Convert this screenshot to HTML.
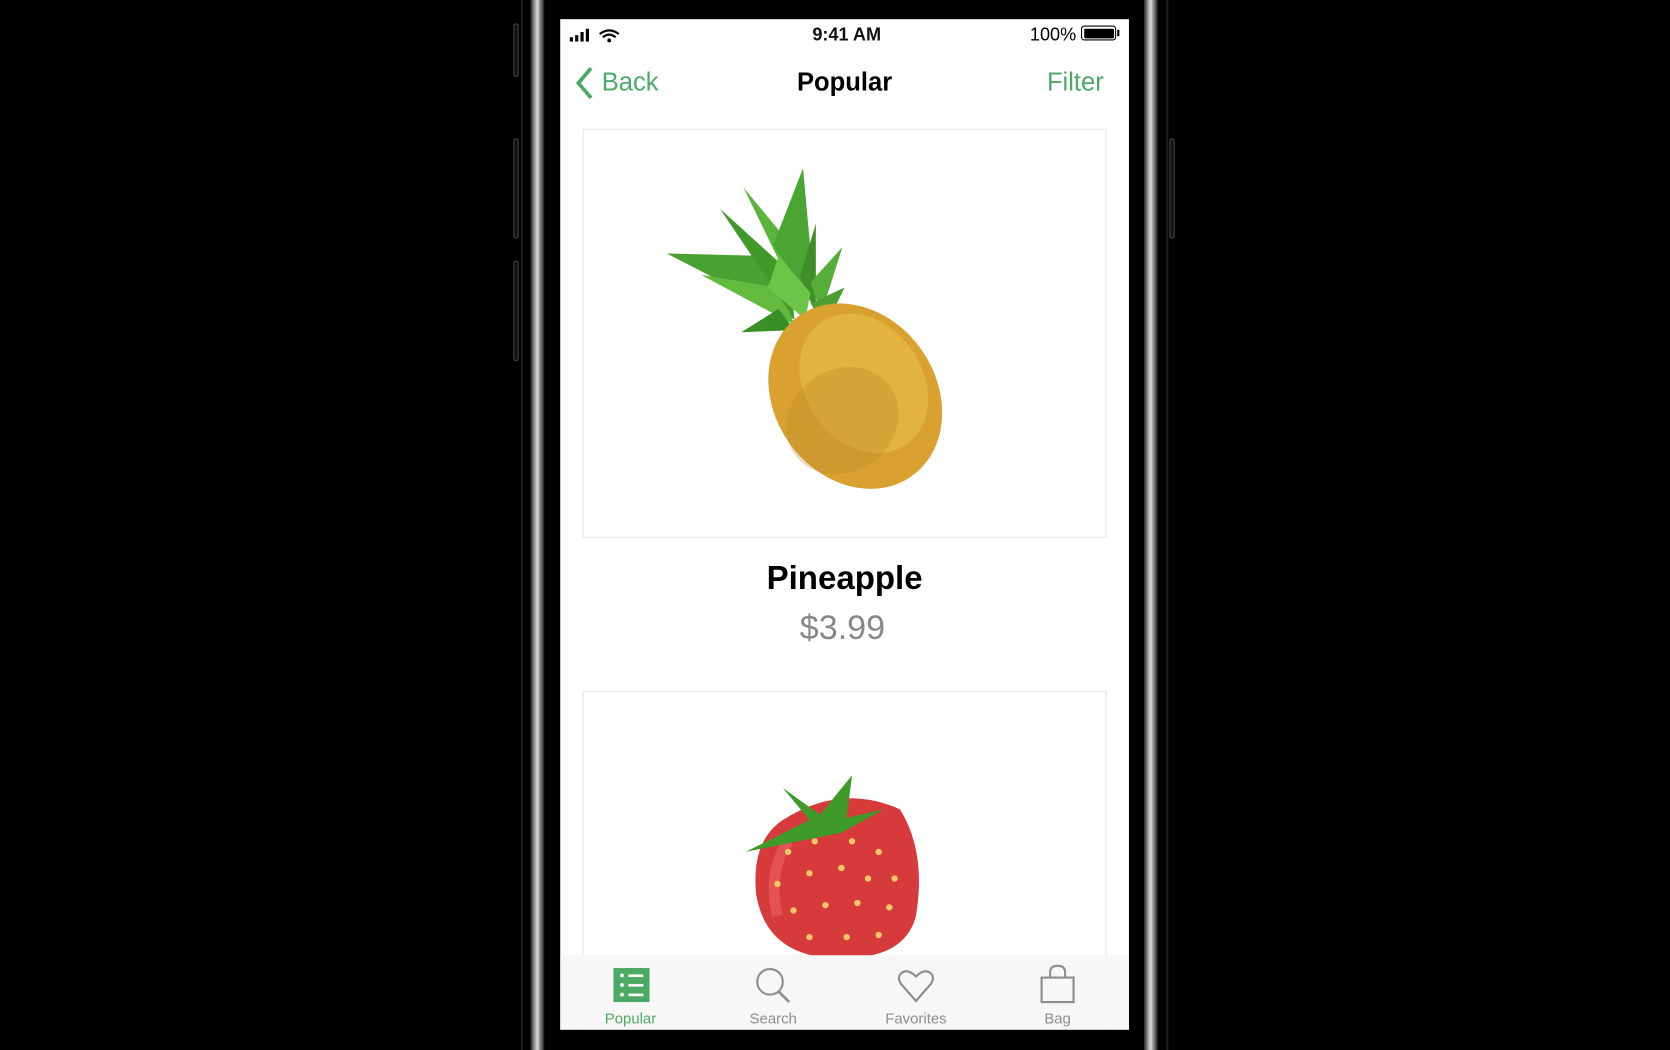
<!DOCTYPE html>
<html><head><meta charset="utf-8"><style>
html,body{margin:0;padding:0;background:#000;width:1670px;height:1050px;overflow:hidden}
#w{position:absolute;left:0;top:0;width:1568px;height:986px;overflow:hidden;transform:scale(1.06505,1.0649);transform-origin:0 0;font-family:"Liberation Sans",sans-serif}
.a{position:absolute}
.g{color:#4caa64}
.m{background:linear-gradient(90deg,#222,#999 30%,#ddd 50%,#888 70%,#222)}
</style></head><body><div id="w">
<div class="a m" style="left:498px;top:0;width:13px;height:986px"></div>
<div class="a m" style="left:1074px;top:0;width:13px;height:986px"></div>
<div class="a" style="left:489px;top:0;width:2px;height:986px;background:#1c1c1c"></div>
<div class="a" style="left:1095px;top:0;width:2px;height:986px;background:#1c1c1c"></div>
<div class="a" style="left:482px;top:22px;width:3px;height:48px;border:1px solid #444;background:#111;border-radius:2px"></div>
<div class="a" style="left:482px;top:130px;width:3px;height:92px;border:1px solid #444;background:#111;border-radius:2px"></div>
<div class="a" style="left:482px;top:245px;width:3px;height:92px;border:1px solid #444;background:#111;border-radius:2px"></div>
<div class="a" style="left:1098px;top:130px;width:3px;height:92px;border:1px solid #444;background:#111;border-radius:2px"></div>
<div class="a" style="left:526px;top:18px;width:534px;height:949px;background:#fff;overflow:hidden">
 <svg class="a" style="left:8px;top:8px" width="50" height="16"><rect x="1" y="9" width="3" height="4" fill="#000"/><rect x="6" y="7" width="3" height="6" fill="#000"/><rect x="11" y="4" width="3" height="9" fill="#000"/><rect x="16" y="1" width="3" height="12" fill="#000"/>
 <path d="M29 6 Q38 -1 47 6" stroke="#000" stroke-width="2" fill="none"/><path d="M32 9 Q38 4 44 9" stroke="#000" stroke-width="2" fill="none"/><circle cx="38" cy="12" r="1.8" fill="#000"/></svg>
 <div class="a" style="left:0;width:538px;top:5px;text-align:center;font-size:17px;font-weight:bold;color:#111">9:41 AM</div>
 <div class="a" style="left:441px;top:5px;font-size:17px">100%</div>
 <div class="a" style="left:489px;top:6px;width:31px;height:12px;border:1.5px solid #000;border-radius:3px"><div style="margin:1.5px;height:9px;background:#000;border-radius:1px"></div></div>
 <div class="a" style="left:523px;top:10px;width:2px;height:6px;background:#000"></div>
 <svg class="a" style="left:13px;top:44px" width="20" height="32"><path d="M16 2 L4 16 L16 30" stroke="#4caa64" stroke-width="3.5" fill="none"/></svg>
 <div class="a g" style="left:39px;top:46px;font-size:24px">Back</div>
 <div class="a" style="left:0;width:534px;top:46px;text-align:center;font-size:24px;font-weight:bold">Popular</div>
 <div class="a g" style="left:457px;top:46px;font-size:24px">Filter</div>
 <div class="a" style="left:21px;top:103px;width:490px;height:382px;border:1px solid #e6e6e6"></div>
 <svg class="a" style="left:100px;top:130px" width="300" height="330" viewBox="640 148 300 330">
   <path d="M760 300 L640 238 L720 240 Z" fill="#4aa030"/>
   <path d="M760 305 L672 258 L745 270 Z" fill="#62bb3e"/>
   <path d="M760 300 L690 196 L755 255 Z" fill="#3f9a2a"/>
   <path d="M770 295 L712 176 L765 240 Z" fill="#5db43c"/>
   <path d="M780 290 L768 158 L740 230 Z" fill="#4aa532"/>
   <path d="M780 295 L780 210 L765 260 Z" fill="#3e8f28"/>
   <path d="M785 295 L805 232 L775 265 Z" fill="#56ad38"/>
   <path d="M790 305 L807 270 L775 285 Z" fill="#4c9e30"/>
   <path d="M760 310 L710 312 L745 290 Z" fill="#3a8e26"/>
   <path d="M770 300 L735 270 L745 240 L775 275 Z" fill="#6cc548"/>
  <ellipse cx="817" cy="372" rx="76" ry="92" transform="rotate(-35 817 372)" fill="#d9a230"/>
  <ellipse cx="825" cy="360" rx="55" ry="70" transform="rotate(-35 825 360)" fill="#e6bb45" opacity=".7"/>
  <ellipse cx="805" cy="395" rx="55" ry="48" transform="rotate(-35 805 395)" fill="#b98428" opacity=".3"/>
 </svg>
 <div class="a" style="left:0;width:534px;top:507px;text-align:center;font-size:31px;color:#000;font-weight:bold">Pineapple</div>
 <div class="a" style="left:0;width:530px;top:553px;text-align:center;font-size:32px;color:#888">$3.99</div>
 <div class="a" style="left:21px;top:631px;width:490px;height:400px;border:1px solid #e6e6e6"></div>
 <svg class="a" style="left:170px;top:700px" width="180" height="180" viewBox="696 718 180 180">
  <path d="M735 770 Q790 735 845 760 Q870 800 860 860 Q850 900 790 900 Q720 900 710 840 Q705 790 735 770 Z" fill="#d63a3a"/>
  <path d="M740 790 Q720 820 730 860" stroke="#ef6c6c" stroke-width="10" fill="none" opacity=".5"/>
  <g fill="#f2c96a"><circle cx="740" cy="800" r="3"/><circle cx="765" cy="790" r="3"/><circle cx="800" cy="790" r="3"/><circle cx="825" cy="800" r="3"/><circle cx="730" cy="830" r="3"/><circle cx="760" cy="820" r="3"/><circle cx="790" cy="815" r="3"/><circle cx="815" cy="825" r="3"/><circle cx="840" cy="825" r="3"/><circle cx="745" cy="855" r="3"/><circle cx="775" cy="850" r="3"/><circle cx="805" cy="848" r="3"/><circle cx="835" cy="852" r="3"/><circle cx="760" cy="880" r="3"/><circle cx="795" cy="880" r="3"/><circle cx="825" cy="878" r="3"/></g>
  <path d="M700 800 L760 770 L735 740 L770 765 L800 728 L795 768 L830 760 L790 782 L750 790 Z" fill="#3f9a2a"/>
 </svg>
 <div class="a" style="left:0;top:879px;width:534px;height:70px;background:#f7f7f7">
  <svg class="a" style="left:50px;top:12px" width="34" height="34"><rect width="34" height="32" fill="#4caa64"/><g fill="#fff"><rect x="14" y="6" width="14" height="2.5"/><rect x="14" y="15" width="14" height="2.5"/><rect x="14" y="24" width="14" height="2.5"/><circle cx="8" cy="7" r="1.8"/><circle cx="8" cy="16" r="1.8"/><circle cx="8" cy="25" r="1.8"/></g></svg>
  <svg class="a" style="left:182px;top:10px" width="36" height="36"><circle cx="15" cy="15" r="12" stroke="#8e8e8e" stroke-width="2" fill="none"/><path d="M23 24 L33 34" stroke="#8e8e8e" stroke-width="2.5"/></svg>
  <svg class="a" style="left:316px;top:12px" width="36" height="34"><path d="M18 31 L4 15 Q0 9 4 5 Q10 0 18 8 Q26 0 32 5 Q36 9 32 15 Z" stroke="#8e8e8e" stroke-width="2" fill="none"/></svg>
  <svg class="a" style="left:450px;top:8px" width="34" height="38"><rect x="2" y="13" width="30" height="23" stroke="#8e8e8e" stroke-width="2" fill="none"/><path d="M10 13 V8 Q10 2 17 2 Q24 2 24 8 V13" stroke="#8e8e8e" stroke-width="2" fill="none"/></svg>
  <div class="a g" style="left:16px;width:100px;top:51px;text-align:center;font-size:14px">Popular</div>
  <div class="a" style="left:150px;width:100px;top:51px;text-align:center;font-size:14px;color:#8e8e8e">Search</div>
  <div class="a" style="left:284px;width:100px;top:51px;text-align:center;font-size:14px;color:#8e8e8e">Favorites</div>
  <div class="a" style="left:417px;width:100px;top:51px;text-align:center;font-size:14px;color:#8e8e8e">Bag</div>
 </div>
</div>
</div></body></html>
